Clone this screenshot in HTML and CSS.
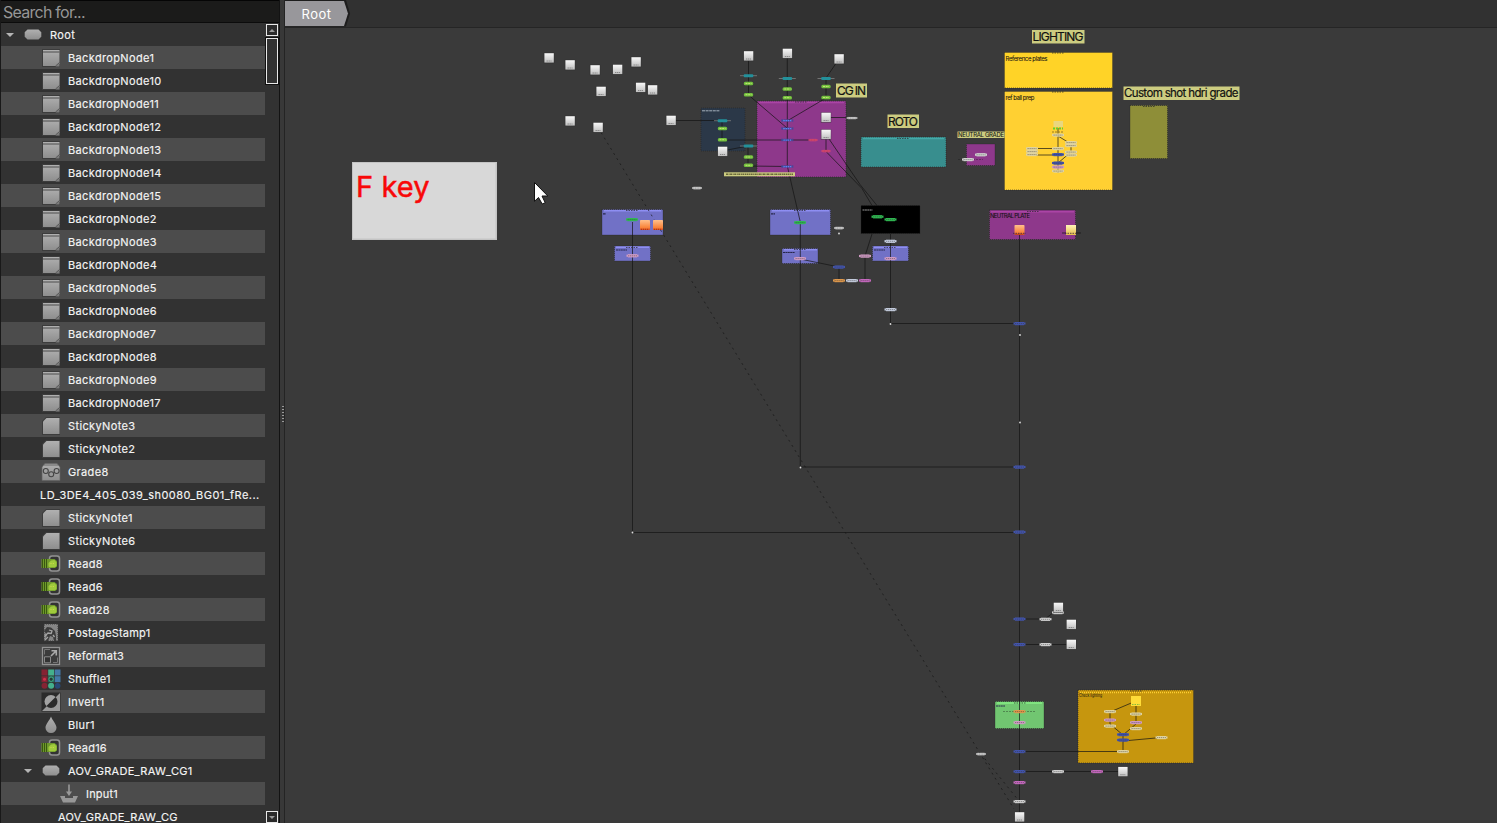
FILE: index.html
```
<!DOCTYPE html>
<html lang="en">
<head>
<meta charset="utf-8">
<title>Node Graph</title>
<link rel="stylesheet" href="styles.css">
</head>
<body>
<svg class="defs" width="0" height="0" aria-hidden="true">
  <defs>
    <linearGradient id="grey" x1="0" y1="0" x2="0" y2="1"><stop offset="0" stop-color="#b0b0b0"/><stop offset="1" stop-color="#8e8e8e"/></linearGradient>
    <linearGradient id="white" x1="0" y1="0" x2="0" y2="1"><stop offset="0" stop-color="#f8f8f8"/><stop offset="1" stop-color="#bebebe"/></linearGradient>
    <linearGradient id="orange" x1="0" y1="0" x2="0" y2="1"><stop offset="0" stop-color="#ffc08c"/><stop offset=".75" stop-color="#f9843a"/><stop offset="1" stop-color="#d5481c"/></linearGradient>
    <linearGradient id="cream" x1="0" y1="0" x2="0" y2="1"><stop offset="0" stop-color="#fff3b8"/><stop offset="1" stop-color="#e6bf4b"/></linearGradient>
  </defs>
  <symbol id="i-group" viewBox="0 0 20 20"><path d="M4.500 4.500h11l2.800 2.800v4.400l-2.800 2.800h-11l-2.800-2.800V7.300z" fill="url(#grey)"/></symbol>
  <symbol id="i-backdrop" viewBox="0 0 20 20"><path d="M1 1h18v18H1z" fill="#3c3c3c"/><path d="M2 2h16.500v13.500l-2.500 2.500H2z" fill="url(#grey)"/><path d="M2 4h16.500" stroke="#4c4c4c"/><path d="M18.500 14.500v4H14.500z" fill="#7c7c7c"/><path d="M14.500 18l4-3.500" stroke="#4a4a4a" stroke-width=".8"/></symbol>
  <symbol id="i-sticky" viewBox="0 0 20 20"><path d="M1 5l4-4h14v18H1z" fill="#3c3c3c"/><path d="M2 5.500L5.500 2h13v16H2z" fill="url(#grey)"/></symbol>
  <symbol id="i-grade" viewBox="0 0 20 20"><path d="M1 5l3-3.500h12L19 5v13.500H1z" fill="url(#grey)" stroke="#626262" stroke-width=".7"/><path d="M3 3h14" stroke="#666"/><g fill="none" stroke="#444" stroke-width="1.100"><circle cx="4.800" cy="9" r="2.500"/><circle cx="10.200" cy="12.200" r="2.500"/><circle cx="15.600" cy="9" r="2.500"/></g></symbol>
  <symbol id="i-read" viewBox="0 0 20 20"><rect x="8.500" y="2" width="10" height="15" rx="2.500" fill="#333" stroke="#929292" stroke-width="1.500"/><path d="M.5 5h13l2.500 2v5.500l-2 1.500H.5z" fill="#6f9a2b"/><path d="M1.500 5v9M3.500 5v9M5.500 5v9" stroke="#33500f" stroke-width=".9"/><path d="M7.500 12V9l2.500-2.500 3.500-.5 2 2.500V12l-1.500 1.200H8z" fill="#a0cb3c"/><path d="M9.500 9.500h4" stroke="#d3db4d" stroke-dasharray="1 1.300"/></symbol>
  <symbol id="i-stamp" viewBox="0 0 20 20"><path d="M3 1h14v17H3z" fill="#858585" stroke="#3b3b3b" stroke-dasharray="1 1"/><path d="M3 8l3-4 4 .500 4 3.500 1 5v5h-2l-1-4-3-1-2 5H4l2-6z" fill="#3c3c3c"/><path d="M3.500 13.500l3.500-3.500 3 .5M8 7l3 1-1 3M4 17l3-3M12 12l1.500 2" stroke="#a5a5a5" fill="none" stroke-width="1.300"/></symbol>
  <symbol id="i-reformat" viewBox="0 0 20 20"><rect x="1.500" y="1.500" width="17" height="17" fill="#3b3b3b" stroke="#929292" stroke-width="1.300"/><path d="M3.500 10.800h6v6h-6z" fill="#333" stroke="#8a8a8a"/><path d="M3.500 8.500v-5h5.500M12 16.500h4.500v-5" fill="none" stroke="#757575"/><path d="M10 10l5-5M10.500 4.700H15.300V9.500" fill="none" stroke="#aaa" stroke-width="1.600"/></symbol>
  <symbol id="i-shuffle" viewBox="0 0 20 20"><g fill="#852333"><rect x=".5" y=".5" width="6" height="6"/><rect x=".5" y="7.200" width="6" height="6"/><circle cx="3.500" cy="16.800" r="3"/></g><g fill="#44b08c"><rect x="7.200" y=".5" width="5.900" height="6"/><circle cx="10.100" cy="16.800" r="3"/></g><rect x="7.200" y="7.200" width="5.900" height="6" fill="#287360"/><circle cx="10.100" cy="10.200" r="2.200" fill="#223c36" stroke="#44b08c"/><g fill="#4379a8"><rect x="13.700" y=".5" width="5.800" height="6"/><rect x="13.700" y="7.200" width="5.800" height="6"/><circle cx="16.600" cy="16.800" r="2.900" fill="#274a76"/></g><circle cx="3.500" cy="10.200" r="1.500" fill="#d4304c"/></symbol>
  <symbol id="i-invert" viewBox="0 0 20 20"><path d="M.5.500h19v19H.5z" fill="#2b2b2b"/><path d="M19 1v18H1z" fill="#999"/><circle cx="10" cy="9.500" r="6.500" fill="#a2a2a2"/><path d="M14.600 4.900a6.500 6.500 0 0 1-9.200 9.200z" fill="#2b2b2b"/></symbol>
  <symbol id="i-blur" viewBox="0 0 20 20"><path d="M10 1.500c1 3.500 5.500 7.500 5.500 11.300a5.500 5.200 0 0 1-11 0C4.500 9 9 5 10 1.500z" fill="url(#grey)"/></symbol>
  <symbol id="i-input" viewBox="0 0 20 20"><path d="M1 12h5v2h8v-2h5l-3 6.500H4z" fill="#979797"/><path d="M10 .5v9" stroke="#999" stroke-width="1.600"/><path d="M7 7.500h6L10 12z" fill="#999"/></symbol>
</svg>
<div class="app">
  <aside class="side">
    <div class="search">Search for...</div>
    <div class="body">
      <ul class="tree">
        <li class="row root"><i class="arrow"></i><svg class="ic"><use href="#i-group"/></svg><span>Root</span></li>
        <li class="row"><svg class="ic"><use href="#i-backdrop"/></svg><span>BackdropNode1</span></li>
        <li class="row"><svg class="ic"><use href="#i-backdrop"/></svg><span>BackdropNode10</span></li>
        <li class="row"><svg class="ic"><use href="#i-backdrop"/></svg><span>BackdropNode11</span></li>
        <li class="row"><svg class="ic"><use href="#i-backdrop"/></svg><span>BackdropNode12</span></li>
        <li class="row"><svg class="ic"><use href="#i-backdrop"/></svg><span>BackdropNode13</span></li>
        <li class="row"><svg class="ic"><use href="#i-backdrop"/></svg><span>BackdropNode14</span></li>
        <li class="row"><svg class="ic"><use href="#i-backdrop"/></svg><span>BackdropNode15</span></li>
        <li class="row"><svg class="ic"><use href="#i-backdrop"/></svg><span>BackdropNode2</span></li>
        <li class="row"><svg class="ic"><use href="#i-backdrop"/></svg><span>BackdropNode3</span></li>
        <li class="row"><svg class="ic"><use href="#i-backdrop"/></svg><span>BackdropNode4</span></li>
        <li class="row"><svg class="ic"><use href="#i-backdrop"/></svg><span>BackdropNode5</span></li>
        <li class="row"><svg class="ic"><use href="#i-backdrop"/></svg><span>BackdropNode6</span></li>
        <li class="row"><svg class="ic"><use href="#i-backdrop"/></svg><span>BackdropNode7</span></li>
        <li class="row"><svg class="ic"><use href="#i-backdrop"/></svg><span>BackdropNode8</span></li>
        <li class="row"><svg class="ic"><use href="#i-backdrop"/></svg><span>BackdropNode9</span></li>
        <li class="row"><svg class="ic"><use href="#i-backdrop"/></svg><span>BackdropNode17</span></li>
        <li class="row"><svg class="ic"><use href="#i-sticky"/></svg><span>StickyNote3</span></li>
        <li class="row"><svg class="ic"><use href="#i-sticky"/></svg><span>StickyNote2</span></li>
        <li class="row"><svg class="ic"><use href="#i-grade"/></svg><span>Grade8</span></li>
        <li class="row plain"><span>LD_3DE4_405_039_sh0080_BG01_fRe...</span></li>
        <li class="row"><svg class="ic"><use href="#i-sticky"/></svg><span>StickyNote1</span></li>
        <li class="row"><svg class="ic"><use href="#i-sticky"/></svg><span>StickyNote6</span></li>
        <li class="row"><svg class="ic"><use href="#i-read"/></svg><span>Read8</span></li>
        <li class="row"><svg class="ic"><use href="#i-read"/></svg><span>Read6</span></li>
        <li class="row"><svg class="ic"><use href="#i-read"/></svg><span>Read28</span></li>
        <li class="row tight"><svg class="ic"><use href="#i-stamp"/></svg><span>PostageStamp1</span></li>
        <li class="row tight"><svg class="ic"><use href="#i-reformat"/></svg><span>Reformat3</span></li>
        <li class="row tight"><svg class="ic"><use href="#i-shuffle"/></svg><span>Shuffle1</span></li>
        <li class="row"><svg class="ic"><use href="#i-invert"/></svg><span>Invert1</span></li>
        <li class="row"><svg class="ic"><use href="#i-blur"/></svg><span>Blur1</span></li>
        <li class="row tight"><svg class="ic"><use href="#i-read"/></svg><span>Read16</span></li>
        <li class="row group"><i class="arrow"></i><svg class="ic"><use href="#i-group"/></svg><span>AOV_GRADE_RAW_CG1</span></li>
        <li class="row child"><svg class="ic"><use href="#i-input"/></svg><span>Input1</span></li>
        <li class="row leaf"><span>AOV_GRADE_RAW_CG</span></li>
      </ul>
      <div class="scroll">
        <div class="sbtn"><i class="up"></i></div>
        <div class="thumb"></div>
        <div class="sbtn end"><i class="down"></i></div>
      </div>
    </div>
  </aside>
  <div class="split"><i class="grip"></i></div>
  <main class="graph">
    <header class="tabs"><svg class="tab" width="66" height="27" viewBox="0 0 66 27"><path class="tab-edge" d="M0 0h61l4 13.500-4 13H0z"/><path class="tab-face" d="M0 1h59l4 12.500-4 12.500H0z"/><text class="tab-text" x="16.500" y="18.500" textLength="29.500">Root</text></svg></header>
    <svg class="canvas" width="1212" height="795" viewBox="285 28 1212 795">
      <defs>
        <g id="sq"><rect x="-5.200" y="-5.200" width="10.400" height="10.400" fill="#292929" opacity=".6"/><rect x="-4.600" y="-4.800" width="9.400" height="9.400" fill="url(#white)"/><path d="M-2.500 3h5" stroke="#777" stroke-width=".8" stroke-dasharray="1.400 .6"/></g>
        <g id="so"><rect x="-5" y="-5" width="10" height="10" rx=".8" fill="url(#orange)"/><path d="M-4 4.300h8" stroke="#a63514" stroke-dasharray="1 1"/></g>
        <g id="sy"><rect x="-5" y="-5" width="10" height="10" fill="url(#cream)"/></g>
        <g id="p"><path d="M-6 0H6" stroke="currentColor" stroke-width="2.200"/><path d="M-4.500 .1H4.500" stroke="currentColor" stroke-width="3.200"/><path d="M-4.500 .1H4.500" stroke="#333" stroke-opacity=".5" stroke-width=".9" stroke-dasharray="1.300 .7"/></g>
        <g id="g"><rect x="-4.700" y="-1.700" width="9.400" height="3.400" rx="1.500" fill="#72c03e"/><path d="M-3 0h6" stroke="#cbe67b" stroke-width=".9" stroke-dasharray="2 .7"/></g>
        <g id="t"><path d="M-8.500 0h17" stroke="#808080" stroke-width=".8"/><rect x="-4.800" y="-1.500" width="9.600" height="3" rx="1" fill="#23909a"/></g>
        <g id="b"><path d="M-6 0H6" stroke="#44489a" stroke-width="2.600" stroke-dasharray="2 .7"/><path d="M-4 .2h8" stroke="#5a86f2" stroke-width="1.200" stroke-dasharray="1.500 .7"/></g>
        <g id="tick"><path d="M-6 0H6" stroke="#28282b" stroke-width=".9" stroke-dasharray="1.500 1" stroke-opacity=".8"/></g>
      </defs>

      <!-- backdrops -->
      <g class="drops">
        <rect class="navy" x="701" y="108" width="44" height="43"/>
        <rect class="plum" x="757" y="101" width="89" height="76"/>
        <rect class="teal" x="861" y="137" width="85" height="30"/>
        <rect class="plum" x="966.500" y="144" width="28.500" height="21.500"/>
        <rect class="yellow" x="1004.500" y="52.500" width="108" height="35.500"/>
        <rect class="yellow2" x="1004.500" y="91.500" width="108" height="98.500"/>
        <rect class="olive" x="1130" y="105.500" width="37.500" height="53"/>
        <rect class="lilac" x="602" y="209.500" width="61" height="25.500"/>
        <rect class="lilac" x="614.500" y="246" width="36" height="15"/>
        <rect class="lilac" x="770" y="209.500" width="60.500" height="25.500"/>
        <rect class="lilac" x="782" y="248.500" width="36" height="15"/>
        <rect class="lilac" x="872.500" y="246" width="36" height="15"/>
        <rect class="black" x="861" y="205.500" width="59" height="28"/>
        <rect class="plum" x="989.500" y="210" width="86" height="29.500"/>
        <rect class="green" x="995" y="701.500" width="49" height="27"/>
        <rect class="gold" x="1078" y="690" width="115.500" height="73"/>
      </g>
      <g class="lights">
        <path d="M604 210.700h57M616 247.300h33M772 210.700h57M784 249.700h33M874 247.300h33" stroke="#8e8ef2"/>
        <path d="M759 102.500h85M991 211.700h83" stroke="#ab44a6"/>
        <path d="M863 138.500h81" stroke="#43aaa9"/>
        <path d="M997 703h45" stroke="#85ee85"/>
        <path d="M1080 692.500h112" stroke="#ffcf31" stroke-dasharray="1 1"/>
      </g>
      <g class="ticks">
        <use href="#tick" x="632" y="210.500"/><use href="#tick" x="632" y="247.500"/><use href="#tick" x="800" y="210.500"/><use href="#tick" x="800" y="249.500"/><use href="#tick" x="890" y="247.500"/><use href="#tick" x="1033" y="211.500"/><use href="#tick" x="903" y="138.500"/><use href="#tick" x="801" y="102"/><use href="#tick" x="1058" y="53"/><use href="#tick" x="1058" y="92"/><use href="#tick" x="1149" y="106.500"/><use href="#tick" x="1020" y="703"/><use href="#tick" x="1136" y="691"/>
      </g>

      <!-- connections -->
      <g class="wires">
        <path d="M748.500 56v39L787 128M787.300 53v113l13 56V467H1019M839 59l-13 19v20l-39 23M671 120.500h51v19.500h91M722 151l26-5v20l39 .500M826 117.500h26M826 134.500v17l36 37 10 17M826 134.500l34 50 17 21M872 234l-7 22v24M890.500 234v89.500H1019M632.500 222v310.500H1019M800 259l39 8v13M1019.500 232v585M1019.500 619H1045l13-10M1019.500 644.500H1071M1019.500 751.500H1122M1019.500 771.500H1122M1058 128v45M1058 136l13 8v8l-13 11M1032 148.500h26M1032 155h26M1136 704v20l-13 11v16M1136 701l-26 11v12l13 11M1123 741l38-3.500M1062 233h19"/>
        <path class="faint" d="M1003 711.500h32M958 159.500h25"/>
        <path class="dash" d="M598 127.500L1014 809M981 754l38 47"/>
      </g>

      <!-- labels -->
      <g class="labels">
        <rect x="1032" y="30" width="52.500" height="13.500"/><rect x="836" y="83.500" width="31" height="14"/><rect x="887.500" y="114.500" width="31.500" height="13.500"/><rect x="1123.500" y="86.500" width="116" height="13.500"/><rect x="957.500" y="131.500" width="47" height="6.500"/><rect x="724" y="172.300" width="71" height="4"/>
      </g>
      <g class="words">
        <text x="1032.500" y="41" textLength="51" class="l">LIGHTING</text>
        <text x="837" y="95" textLength="29" class="l">CG IN</text>
        <text x="888" y="126" textLength="30" class="l">ROTO</text>
        <text x="1124" y="97" textLength="114.500" class="m">Custom shot hdri grade</text>
        <text x="958" y="137" textLength="46" class="s">NEUTRAL GRADE</text>
        <text x="1005.500" y="60.500" textLength="42" class="s">Reference plates</text>
        <text x="1005.500" y="99.500" textLength="29" class="s">ref ball prep</text>
        <text x="990" y="218" textLength="40" class="s">NEUTRAL PLATE</text>
        <text x="1079" y="696.500" textLength="23" lengthAdjust="spacingAndGlyphs" class="xs">Check lighting</text>
      </g>
      <g class="scribbles">
        <path d="M726 174.300h67" stroke="#3b3a18" stroke-opacity=".7" stroke-width="1.500" stroke-dasharray="2 .6 1 .5"/>
        <path d="M702 110.800h18" stroke="#a6b1bd" stroke-width="1" stroke-dasharray="3 .6"/>
        <path d="M603 213.800h3M616 250h11M771 213.800h4M783 252.500h12M874 250h11M996 706h9" stroke="#27274b" stroke-width="1.200" stroke-dasharray="2 .4"/>
        <path d="M862.500 210h10" stroke="#aaa" stroke-width=".9" stroke-dasharray="2 .4"/>
      </g>

      <!-- operators -->
      <g>
        <use href="#t" x="748.500" y="75.700"/><use href="#t" x="787.300" y="78.500"/><use href="#t" x="826" y="78.500"/><use href="#t" x="722.500" y="120.700"/><use href="#t" x="748.500" y="146"/>
        <use href="#g" x="748.500" y="83.500"/><use href="#g" x="748.500" y="94.700"/><use href="#g" x="787.300" y="89"/><use href="#g" x="787.300" y="97.700"/><use href="#g" x="826" y="86.500"/><use href="#g" x="826" y="97.500"/><use href="#g" x="722.500" y="128.500"/><use href="#g" x="722.500" y="139.700"/><use href="#g" x="748.500" y="157"/><use href="#g" x="748.500" y="165.300"/>
        <use href="#b" x="787.300" y="120.500"/><use href="#b" x="787.300" y="128.500"/><use href="#b" x="787.300" y="140"/><use href="#b" x="787.300" y="166.500"/>
      </g>
      <g class="c-red"><use href="#p" transform="translate(813 140) scale(.75)"/><use href="#p" transform="translate(826 151) scale(.75)"/></g>
      <g class="c-lime"><use href="#p" x="632" y="219.500"/><use href="#p" x="800" y="222.500"/><use href="#p" x="877.500" y="216.700"/><use href="#p" x="890.500" y="219.500"/></g>
      <g class="c-pink"><use href="#p" x="632.500" y="255.700"/><use href="#p" x="800" y="258.500"/><use href="#p" x="890.500" y="258.500"/><use href="#p" x="865" y="256"/><use href="#p" x="1019.500" y="722.500"/><use href="#p" x="1110" y="720"/><use href="#p" x="1136" y="722.500"/></g>
      <g class="c-mag"><use href="#p" x="865" y="280.500"/><use href="#p" x="1097" y="771.500"/><use href="#p" x="1019.500" y="782.500"/></g>
      <g class="c-org"><use href="#p" x="839" y="280.500"/><use href="#p" x="1019.500" y="711.500"/></g>
      <g class="c-blue"><use href="#p" x="839" y="267"/><use href="#p" x="1019.500" y="323.500"/><use href="#p" x="1019.500" y="467"/><use href="#p" x="1019.500" y="532"/><use href="#p" x="1019.500" y="619"/><use href="#p" x="1019.500" y="644.500"/><use href="#p" x="1019.500" y="751.500"/><use href="#p" x="1019.500" y="771.500"/><use href="#p" x="1058" y="154.500"/><use href="#p" x="1058" y="163"/><use href="#p" x="1123" y="734.500"/><use href="#p" x="1123" y="740"/></g>
      <g class="c-pale"><use href="#p" x="890.500" y="241.200"/><use href="#p" x="852" y="280.500"/><use href="#p" x="890.500" y="309.500"/></g>
      <g class="c-white"><use href="#p" transform="translate(852 118) scale(.9 .7)"/><use href="#p" transform="translate(697 188) scale(.8)"/><use href="#p" transform="translate(839 228) scale(.8)"/><use href="#p" x="981" y="154.700"/><use href="#p" x="968" y="159.500"/><use href="#p" x="1045.500" y="619.200"/><use href="#p" x="1045.500" y="644.500"/><use href="#p" transform="translate(981 754) scale(.8)"/><use href="#p" x="1058" y="771.500"/><use href="#p" x="1019.500" y="801.500"/><use href="#p" x="1058" y="612.500"/></g>
      <g class="c-cream"><use href="#p" x="1058" y="148.500"/><use href="#p" x="1058" y="171"/><use href="#p" x="1032" y="148.500"/><use href="#p" x="1032" y="151.500"/><use href="#p" x="1032" y="154.500"/><use href="#p" x="1071" y="142.500"/><use href="#p" x="1071" y="145.500"/><use href="#p" x="1071" y="152"/><use href="#p" x="1071" y="155"/><use href="#p" x="1110" y="711.500"/><use href="#p" x="1110" y="726"/><use href="#p" x="1136" y="714"/><use href="#p" x="1136" y="728.500"/><use href="#p" x="1161.500" y="737.500"/><use href="#p" x="1123" y="751.500"/><use href="#p" x="1058" y="135"/></g>
      <g class="c-pink"><use href="#p" x="1058" y="167"/></g>
      <path d="M1053.500 121h9.500v6h-9.500z" fill="#e9d780"/><path d="M1053 128.500h10" stroke="#60cf38" stroke-width="1.800" stroke-dasharray="2 1"/><path d="M1052 132h12" stroke="#987d26" stroke-width="1" stroke-dasharray="2 1"/>
      <g fill="#ddd"><circle cx="632.500" cy="532.500" r=".9"/><circle cx="800.500" cy="467.500" r=".9"/><circle cx="890.500" cy="324" r=".9"/><circle cx="1020" cy="335" r=".9"/><circle cx="1020" cy="422.500" r=".9"/><circle cx="839" cy="233.500" r=".9"/></g>

      <!-- sources -->
      <g>
        <use href="#sq" x="549" y="58"/><use href="#sq" x="570" y="65"/><use href="#sq" x="595" y="70"/><use href="#sq" x="617.500" y="69.500"/><use href="#sq" x="636" y="62"/><use href="#sq" x="601" y="91.500"/><use href="#sq" x="640.500" y="87.500"/><use href="#sq" x="652.500" y="90"/><use href="#sq" x="570" y="121"/><use href="#sq" x="598" y="127.500"/><use href="#sq" x="671" y="120.500"/>
        <use href="#sq" x="748.500" y="56"/><use href="#sq" x="787.300" y="53.500"/><use href="#sq" x="839" y="59"/><use href="#sq" x="826" y="117.500"/><use href="#sq" x="826" y="134.500"/><use href="#sq" x="722.500" y="151.500"/>
        <use href="#sq" x="1058.300" y="607.500"/><use href="#sq" x="1071.200" y="624.500"/><use href="#sq" x="1071.200" y="644.500"/><use href="#sq" x="1122.800" y="771.700"/><use href="#sq" x="1019.500" y="817"/>
        <use href="#so" x="645" y="225"/><use href="#so" x="658" y="225"/><use href="#so" x="1019.500" y="230"/><use href="#sy" x="1071" y="230"/>
        <path d="M1013 233.300h13M1065 233.300h12" stroke="#3b2740" stroke-width=".8" stroke-dasharray="1.500 1"/>
        <rect x="1131" y="696" width="10" height="10" fill="#ffdc38"/><path d="M1132 704.500h8" stroke="#85bd3c" stroke-dasharray="1.500 1"/>
      </g>

      <!-- sticky note and pointer -->
      <rect class="note-edge" x="352" y="162" width="145" height="78"/>
      <rect class="note-face" x="353" y="163" width="142.500" height="75.500"/>
      <text class="note-text" x="356" y="197" textLength="73.500">F key</text>
      <path class="pointer" d="M534.500 182.500v18.800l4-3.800 3.700 6.500 3-1.300-3.200-6.700h5.800z"/>
    </svg>
  </main>
</div>
</body>
</html>
```

FILE: styles.css
```
* { box-sizing: border-box; }
body {
  margin: 0;
  background: #323232;
  font-family: Inter, "Liberation Sans", sans-serif;
  overflow: hidden;
}
.defs { position: absolute; }
.app { display: flex; width: 1497px; height: 823px; overflow: hidden; }

/* node list */
.side {
  width: 280px;
  height: 823px;
  display: flex;
  flex-direction: column;
  border-left: 1px solid #191919;
  border-right: 1px solid #131313;
  background: #323232;
}
.search {
  height: 23px;
  flex: none;
  padding-left: 2px;
  border-top: 1px solid #050505;
  border-bottom: 1px solid #0c0c0c;
  background: #1b1b1a;
  color: #969696;
  font-size: 16px;
  line-height: 22px;
  letter-spacing: -0.75px;
}
.body { display: flex; flex: 1; min-height: 0; }
.tree { width: 264px; margin: 0; padding: 0; list-style: none; overflow: hidden; }
.row {
  display: flex;
  align-items: center;
  height: 23px;
  padding-left: 40px;
  color: #f4f4f4;
  font-size: 11px;
  letter-spacing: 0.36px;
  white-space: nowrap;
}
.row:nth-child(even) { background: #4c4c4c; }
.row span { line-height: 23px; padding-top: 1px; -webkit-text-stroke: 0.15px #f4f4f4; }
.ic { width: 20px; height: 20px; margin-right: 7px; flex: none; }
.tight { letter-spacing: 0.2px; }
.root { padding-left: 5px; }
.root .ic { margin-left: 9px; }
.plain { padding-left: 39px; letter-spacing: 0.43px; }
.group { padding-left: 23px; letter-spacing: 0.29px; }
.group .ic { margin-left: 9px; }
.child { padding-left: 58px; letter-spacing: 0.2px; }
.leaf { padding-left: 57px; letter-spacing: 0.29px; }
.arrow { border: 4px solid transparent; border-top: 4px solid #b5b5b5; border-bottom: 0; }

/* scrollbar */
.scroll { width: 14px; display: flex; flex-direction: column; padding-top: 1px; }
.sbtn {
  width: 12px;
  height: 12px;
  margin-left: 1px;
  border: 1px solid #e8e8e8;
  background: #2b2b2b;
  display: flex;
  align-items: center;
  justify-content: center;
}
.up { border: 3px solid transparent; border-bottom-color: #999; border-top: 0; }
.down { border: 3px solid transparent; border-top-color: #999; border-bottom: 0; }
.thumb {
  width: 12px;
  height: 46px;
  margin: 2px 0 0 1px;
  border: 1px solid #e8e8e8;
  background: #323232;
  box-shadow: 0 0 0 1px #101010;
}
.end { margin-top: auto; }

.split {
  width: 5px;
  border-right: 1px solid #242424;
  background: #383838;
  display: flex;
  align-items: center;
  justify-content: flex-end;
}
.grip { width: 2px; height: 17px; margin: 5px 0 0; background: repeating-linear-gradient(#9a9a9a 0 1px, #383838 1px 3px); }

/* graph */
.graph { flex: 1; background: #3a3a3a; }
.tabs { height: 28px; background: #313131; border-bottom: 1px solid #252525; }
.tab { display: block; }
.tab-edge { fill: #1d1d1d; }
.tab-face { fill: #98979b; }
.tab-text { font-size: 13px; fill: #fff; }
.canvas { display: block; }

.drops rect { stroke: #262626; stroke-opacity: .6; stroke-dasharray: 1 1; }
.navy { fill: #2b3848; }
.plum { fill: #8e388b; }
.teal { fill: #388e8e; }
.yellow { fill: #ffd327; }
.yellow2 { fill: #ffd032; }
.olive { fill: #8e8e38; }
.lilac { fill: #7171c6; }
.black { fill: #000; }
.green { fill: #71c671; }
.gold { fill: #c6960e; }
.lights { fill: none; stroke-width: 1.5; }
.wires { fill: none; stroke: #141414; stroke-opacity: .7; stroke-width: 1; }
.faint { stroke-opacity: .35; stroke-dasharray: 2 1; }
.dash { stroke-dasharray: 2 4; }

.labels { fill: #cccc80; }
.words { fill: #111; stroke: #111; stroke-width: .2; }
.l { font-size: 12px; }
.m { font-size: 11.5px; }
.s { font-size: 6px; stroke-width: .05; }
.xs { font-size: 4.5px; stroke: none; }

.c-red { color: #dc4672; }
.c-lime { color: #2fb851; }
.c-pink { color: #d09bc4; }
.c-mag { color: #c468bd; }
.c-org { color: #df984c; }
.c-blue { color: #4254ac; }
.c-pale { color: #c3cbdc; }
.c-white { color: #d0d0d0; }
.c-cream { color: #e0d4a0; }

.note-edge { fill: #c4c4c4; }
.note-face { fill: #d8d8d8; }
.note-text { font-size: 29px; fill: #f80808; stroke: #f80808; stroke-width: .5; }
.pointer { fill: #fff; stroke: #111; }
```
